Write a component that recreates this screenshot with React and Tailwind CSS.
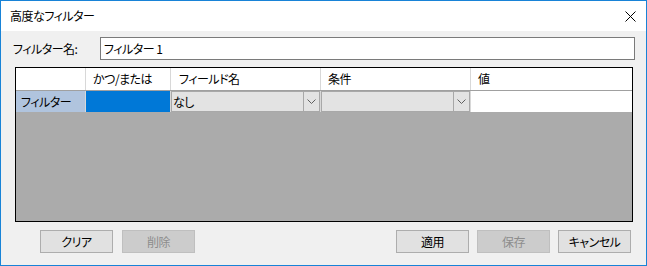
function ComboCell({ text }) {
  return (
    <div className="h-full border-r border-[#d8d8d8] p-0">
      <div className="h-full flex border border-[#a8a8a8] bg-[#e3e3e3]">
        <div className="flex-1 flex items-center pl-[1px] text-[12px] leading-none">{text}</div>
        <div className="w-[16px] border-l border-[#a8a8a8] flex items-center justify-center">
          <svg width="9" height="5" viewBox="0 0 9 5">
            <path d="M0.5 0.5 L4.5 4.5 L8.5 0.5" fill="none" stroke="#606060" strokeWidth="1" />
          </svg>
        </div>
      </div>
    </div>
  );
}

function Btn({ children, disabled }) {
  return (
    <button
      className={
        disabled
          ? "w-[73px] h-[23px] border border-[#bfbfbf] bg-[#cccccc] text-[#8d8d8d] text-[12px] leading-none"
          : "w-[73px] h-[23px] border border-[#adadad] bg-[#e1e1e1] text-black text-[12px] leading-none"
      }
    >
      {children}
    </button>
  );
}

export default function App() {
  return (
    <div
      className="w-[647px] h-[266px] border border-[#1883d7] bg-[#f0f0f0] flex flex-col text-black tracking-[-0.5px] [font-feature-settings:'palt']"
      style={{ fontFamily: '"Noto Sans CJK JP", "Noto Sans", sans-serif' }}
    >
      {/* title bar */}
      <div className="h-[30px] bg-white flex items-center justify-between pl-[9px] pr-[10px]">
        <span className="text-[12px] leading-none">高度なフィルター</span>
        <svg width="11" height="11" viewBox="0 0 11 11">
          <path d="M0.5 0.5 L10.5 10.5 M10.5 0.5 L0.5 10.5" stroke="#000" strokeWidth="1" />
        </svg>
      </div>

      {/* name row */}
      <div className="mt-[6px] flex items-center pl-[12px]">
        <span className="w-[87px] text-[12px] leading-none">フィルター名:</span>
        <div className="w-[535px] h-[23px] border border-[#7a7a7a] bg-white flex items-center pl-[3px] text-[12px] leading-none">
          フィルター 1
        </div>
      </div>

      {/* grid */}
      <div className="mt-[7px] ml-[14px] w-[618px] h-[155px] border border-black bg-[#ababab] flex flex-col">
        <div className="h-[23px] bg-white border-b border-[#a0a0a0] flex text-[12px] leading-none">
          <div className="w-[70px] border-r border-[#d8d8d8]" />
          <div className="w-[85px] border-r border-[#d8d8d8] flex items-center pl-[7px]">かつ/または</div>
          <div className="w-[150px] border-r border-[#d8d8d8] flex items-center pl-[8px]">フィールド名</div>
          <div className="w-[150px] border-r border-[#d8d8d8] flex items-center pl-[7px]">条件</div>
          <div className="flex-1 flex items-center pl-[7px]">値</div>
        </div>
        <div className="h-[21px] flex text-[12px] leading-none">
          <div className="w-[70px] bg-[#b0c4de] border-r border-[#d8d8d8] flex items-center pl-[5px]">フィルター</div>
          <div className="w-[85px] bg-[#0078d7] border-r border-[#d8d8d8]" />
          <div className="w-[150px]">
            <ComboCell text="なし" />
          </div>
          <div className="w-[150px]">
            <ComboCell text="" />
          </div>
          <div className="flex-1 bg-white" />
        </div>
        <div className="flex-1" />
      </div>

      {/* buttons */}
      <div className="mt-[8px] flex items-center pl-[39px] pr-[15px]">
        <div className="flex gap-[9px]">
          <Btn>クリア</Btn>
          <Btn disabled>削除</Btn>
        </div>
        <div className="ml-auto flex gap-[8px]">
          <Btn>適用</Btn>
          <Btn disabled>保存</Btn>
          <Btn>キャンセル</Btn>
        </div>
      </div>
    </div>
  );
}
